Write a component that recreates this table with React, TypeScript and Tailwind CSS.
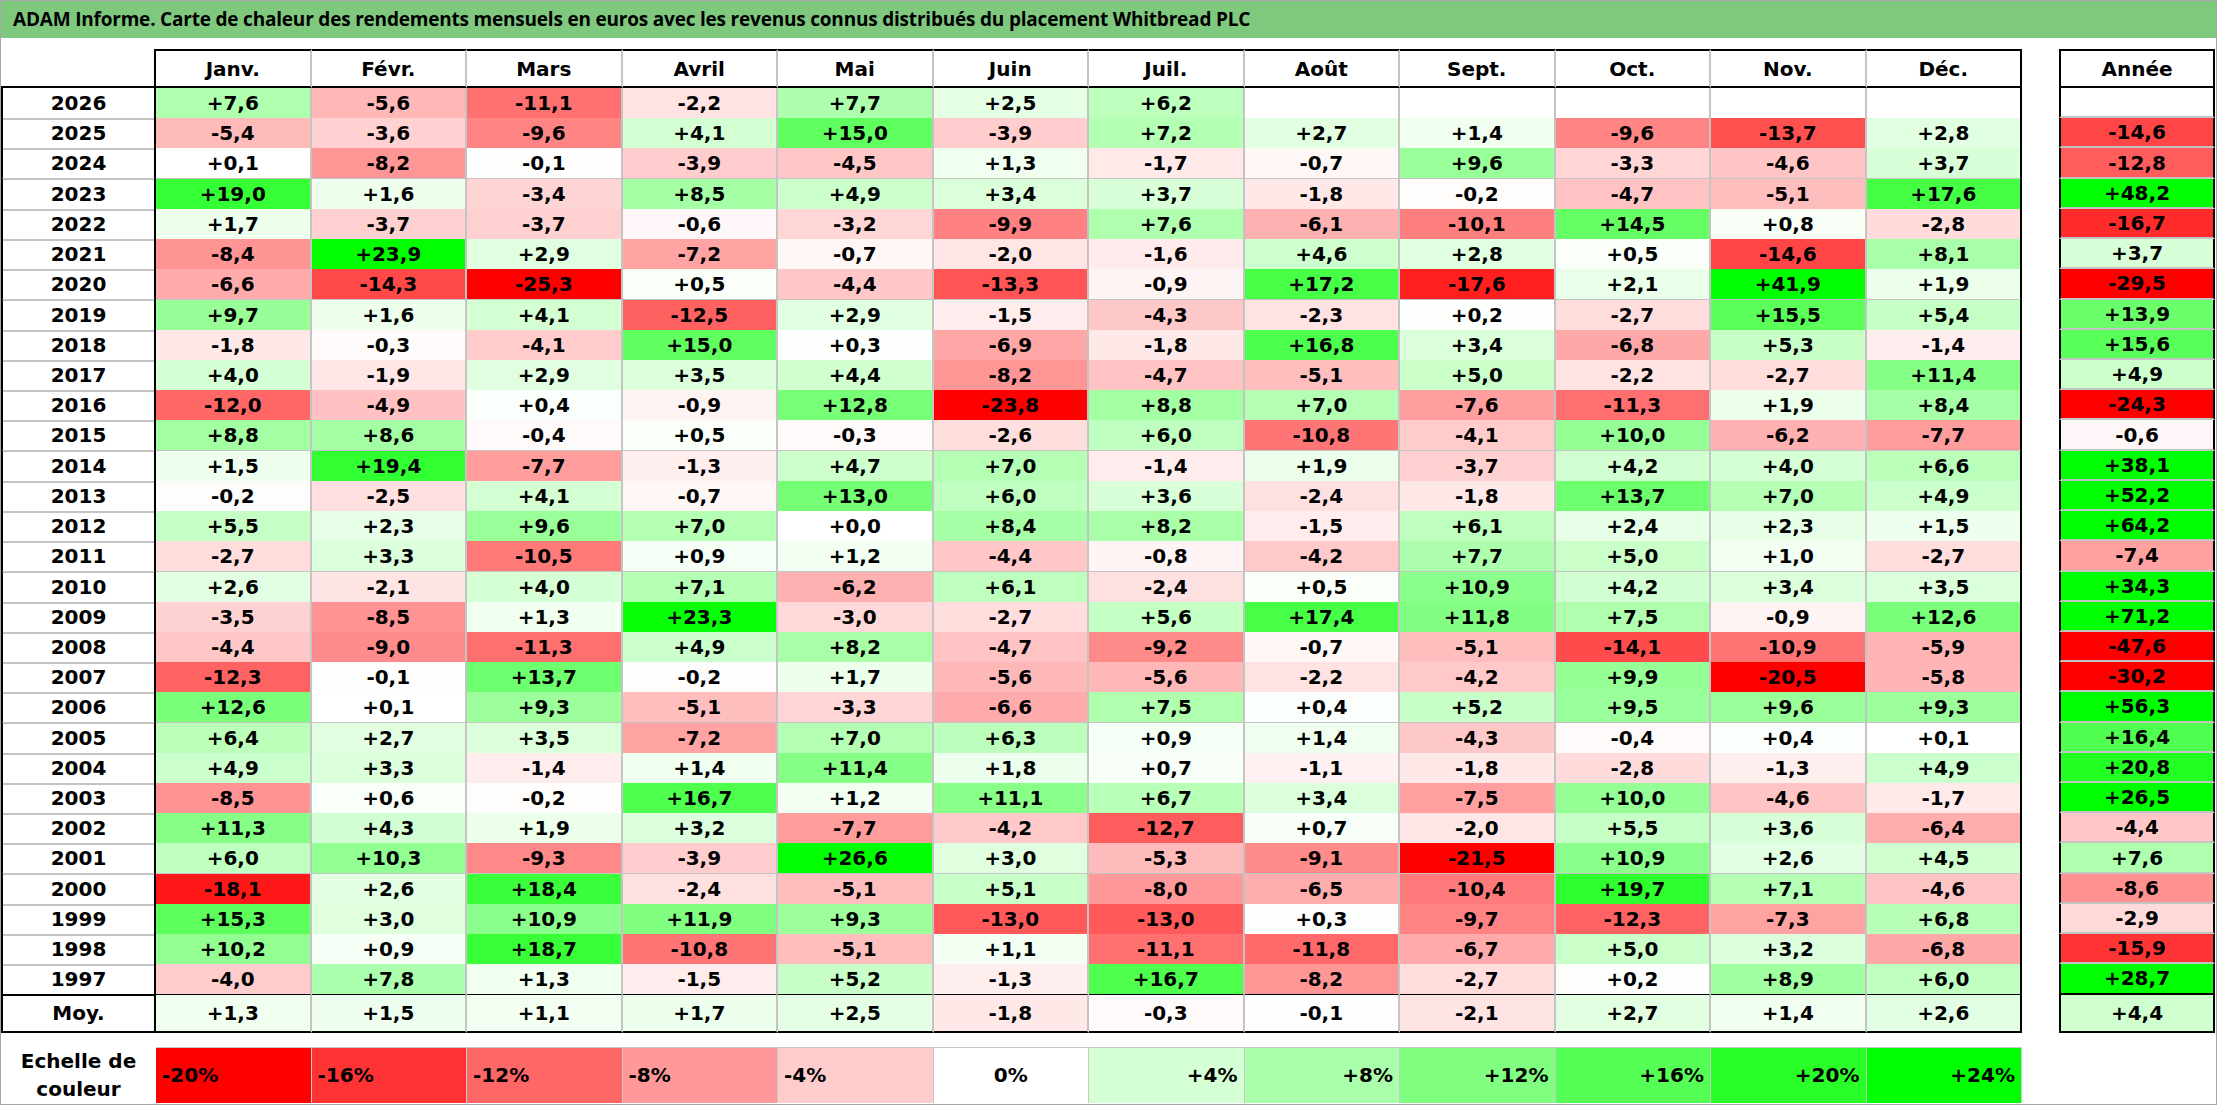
const MONTHS = ["Janv.", "Févr.", "Mars", "Avril", "Mai", "Juin", "Juil.", "Août", "Sept.", "Oct.", "Nov.", "Déc."]

// year, 12 monthly values (null = not yet known), yearly value
const ROWS: [string, (number | null)[], number | null][] = [
  ["2026", [7.6, -5.6, -11.1, -2.2, 7.7, 2.5, 6.2, null, null, null, null, null], null],
  ["2025", [-5.4, -3.6, -9.6, 4.1, 15.0, -3.9, 7.2, 2.7, 1.4, -9.6, -13.7, 2.8], -14.6],
  ["2024", [0.1, -8.2, -0.1, -3.9, -4.5, 1.3, -1.7, -0.7, 9.6, -3.3, -4.6, 3.7], -12.8],
  ["2023", [19.0, 1.6, -3.4, 8.5, 4.9, 3.4, 3.7, -1.8, -0.2, -4.7, -5.1, 17.6], 48.2],
  ["2022", [1.7, -3.7, -3.7, -0.6, -3.2, -9.9, 7.6, -6.1, -10.1, 14.5, 0.8, -2.8], -16.7],
  ["2021", [-8.4, 23.9, 2.9, -7.2, -0.7, -2.0, -1.6, 4.6, 2.8, 0.5, -14.6, 8.1], 3.7],
  ["2020", [-6.6, -14.3, -25.3, 0.5, -4.4, -13.3, -0.9, 17.2, -17.6, 2.1, 41.9, 1.9], -29.5],
  ["2019", [9.7, 1.6, 4.1, -12.5, 2.9, -1.5, -4.3, -2.3, 0.2, -2.7, 15.5, 5.4], 13.9],
  ["2018", [-1.8, -0.3, -4.1, 15.0, 0.3, -6.9, -1.8, 16.8, 3.4, -6.8, 5.3, -1.4], 15.6],
  ["2017", [4.0, -1.9, 2.9, 3.5, 4.4, -8.2, -4.7, -5.1, 5.0, -2.2, -2.7, 11.4], 4.9],
  ["2016", [-12.0, -4.9, 0.4, -0.9, 12.8, -23.8, 8.8, 7.0, -7.6, -11.3, 1.9, 8.4], -24.3],
  ["2015", [8.8, 8.6, -0.4, 0.5, -0.3, -2.6, 6.0, -10.8, -4.1, 10.0, -6.2, -7.7], -0.6],
  ["2014", [1.5, 19.4, -7.7, -1.3, 4.7, 7.0, -1.4, 1.9, -3.7, 4.2, 4.0, 6.6], 38.1],
  ["2013", [-0.2, -2.5, 4.1, -0.7, 13.0, 6.0, 3.6, -2.4, -1.8, 13.7, 7.0, 4.9], 52.2],
  ["2012", [5.5, 2.3, 9.6, 7.0, 0.0, 8.4, 8.2, -1.5, 6.1, 2.4, 2.3, 1.5], 64.2],
  ["2011", [-2.7, 3.3, -10.5, 0.9, 1.2, -4.4, -0.8, -4.2, 7.7, 5.0, 1.0, -2.7], -7.4],
  ["2010", [2.6, -2.1, 4.0, 7.1, -6.2, 6.1, -2.4, 0.5, 10.9, 4.2, 3.4, 3.5], 34.3],
  ["2009", [-3.5, -8.5, 1.3, 23.3, -3.0, -2.7, 5.6, 17.4, 11.8, 7.5, -0.9, 12.6], 71.2],
  ["2008", [-4.4, -9.0, -11.3, 4.9, 8.2, -4.7, -9.2, -0.7, -5.1, -14.1, -10.9, -5.9], -47.6],
  ["2007", [-12.3, -0.1, 13.7, -0.2, 1.7, -5.6, -5.6, -2.2, -4.2, 9.9, -20.5, -5.8], -30.2],
  ["2006", [12.6, 0.1, 9.3, -5.1, -3.3, -6.6, 7.5, 0.4, 5.2, 9.5, 9.6, 9.3], 56.3],
  ["2005", [6.4, 2.7, 3.5, -7.2, 7.0, 6.3, 0.9, 1.4, -4.3, -0.4, 0.4, 0.1], 16.4],
  ["2004", [4.9, 3.3, -1.4, 1.4, 11.4, 1.8, 0.7, -1.1, -1.8, -2.8, -1.3, 4.9], 20.8],
  ["2003", [-8.5, 0.6, -0.2, 16.7, 1.2, 11.1, 6.7, 3.4, -7.5, 10.0, -4.6, -1.7], 26.5],
  ["2002", [11.3, 4.3, 1.9, 3.2, -7.7, -4.2, -12.7, 0.7, -2.0, 5.5, 3.6, -6.4], -4.4],
  ["2001", [6.0, 10.3, -9.3, -3.9, 26.6, 3.0, -5.3, -9.1, -21.5, 10.9, 2.6, 4.5], 7.6],
  ["2000", [-18.1, 2.6, 18.4, -2.4, -5.1, 5.1, -8.0, -6.5, -10.4, 19.7, 7.1, -4.6], -8.6],
  ["1999", [15.3, 3.0, 10.9, 11.9, 9.3, -13.0, -13.0, 0.3, -9.7, -12.3, -7.3, 6.8], -2.9],
  ["1998", [10.2, 0.9, 18.7, -10.8, -5.1, 1.1, -11.1, -11.8, -6.7, 5.0, 3.2, -6.8], -15.9],
  ["1997", [-4.0, 7.8, 1.3, -1.5, 5.2, -1.3, 16.7, -8.2, -2.7, 0.2, 8.9, 6.0], 28.7],
]

const AVERAGE: (number | null)[] = [1.3, 1.5, 1.1, 1.7, 2.5, -1.8, -0.3, -0.1, -2.1, 2.7, 1.4, 2.6]
const AVERAGE_YEAR = 4.4

const SCALE = [-20, -16, -12, -8, -4, 0, 4, 8, 12, 16, 20, 24]

// white at 0, full red at -20 and below, full green at +24 and above
function heat(v: number | null) {
  if (v === null) return "#ffffff"
  if (v >= 0) {
    const c = Math.round(255 * (1 - Math.min(v / 24, 1)))
    return `rgb(${c},255,${c})`
  }
  const c = Math.round(255 * (1 - Math.min(-v / 20, 1)))
  return `rgb(255,${c},${c})`
}

function fmt(v: number | null) {
  if (v === null) return ""
  return (v >= 0 ? "+" : "-") + Math.abs(v).toFixed(1).replace(".", ",")
}

function MonthRow({ label, values, last, avg }: { label: string; values: (number | null)[]; last?: boolean; avg?: boolean }) {
  const bottom = last || avg ? "border-b-black" : "border-b-[#c4c4c4]"
  return (
    <div className={`grid grid-cols-[155px_repeat(12,minmax(0,1fr))] ${avg ? "h-[38px]" : "h-[30.23px]"}`}>
      <div className={`flex items-center justify-center border-l-2 border-r-2 border-b-2 border-l-black border-r-black ${bottom}`}>
        {label}
      </div>
      {values.map((v, i) => (
        <div
          key={i}
          className={`flex items-center justify-center border-r-2 border-b-2 ${i === 11 ? "border-r-black" : "border-r-[#c4c4c4]"} ${bottom}`}
          style={{ backgroundColor: heat(v) }}
        >
          {fmt(v)}
        </div>
      ))}
    </div>
  )
}

function YearCell({ value, last, avg }: { value: number | null; last?: boolean; avg?: boolean }) {
  const bottom = last || avg ? "border-b-black" : "border-b-[#c4c4c4]"
  return (
    <div
      className={`flex items-center justify-center border-l-2 border-r-2 border-b-2 border-l-black border-r-black ${bottom} ${avg ? "h-[38px]" : "h-[30.23px]"}`}
      style={{ backgroundColor: heat(value) }}
    >
      {fmt(value)}
    </div>
  )
}

export default function App() {
  return (
    <div className="w-[2217px] h-[1105px] overflow-hidden border border-[#a6a6a6] bg-white text-black font-['DejaVu_Sans',sans-serif] font-bold text-[20px]">
      <div className="h-[37px] bg-[#7fc97f] flex items-center pl-[12px] font-['Open_Sans',sans-serif] text-[19px] tracking-[-0.2px]">
        ADAM Informe. Carte de chaleur des rendements mensuels en euros avec les revenus connus distribués du placement Whitbread PLC
      </div>

      <div className="mt-[11px] flex">
        <div className="w-[2021px] flex flex-col">
          <div className="grid grid-cols-[155px_repeat(12,minmax(0,1fr))] h-[39px]">
            <div className="border-r-2 border-b-2 border-black" />
            {MONTHS.map((m, i) => (
              <div
                key={m}
                className={`flex items-center justify-center border-t-2 border-b-2 border-r-2 border-t-black border-b-black ${i === 11 ? "border-r-black" : "border-r-[#c4c4c4]"}`}
              >
                {m}
              </div>
            ))}
          </div>
          {ROWS.map(([year, values], i) => (
            <MonthRow key={year} label={year} values={values} last={i === ROWS.length - 1} />
          ))}
          <MonthRow label="Moy." values={AVERAGE} avg />

          <div className="mt-[14px] grid grid-cols-[155px_repeat(12,minmax(0,1fr))] h-[56px]">
            <div className="flex items-center justify-center text-center leading-[28px]">
              Echelle de
              <br />
              couleur
            </div>
            {SCALE.map((s) => (
              <div
                key={s}
                className={`flex items-center border-t border-r border-[#c8c8c8] ${s < 0 ? "justify-start pl-[6px]" : s === 0 ? "justify-center" : "justify-end pr-[6px]"}`}
                style={{ backgroundColor: heat(s) }}
              >
                {s > 0 ? `+${s}%` : `${s}%`}
              </div>
            ))}
          </div>
        </div>

        <div className="ml-[37px] w-[156px] flex flex-col">
          <div className="h-[39px] flex items-center justify-center border-2 border-black">Année</div>
          {ROWS.map(([year, , total], i) => (
            <YearCell key={year} value={total} last={i === ROWS.length - 1} />
          ))}
          <YearCell value={AVERAGE_YEAR} avg />
        </div>
      </div>
    </div>
  )
}
